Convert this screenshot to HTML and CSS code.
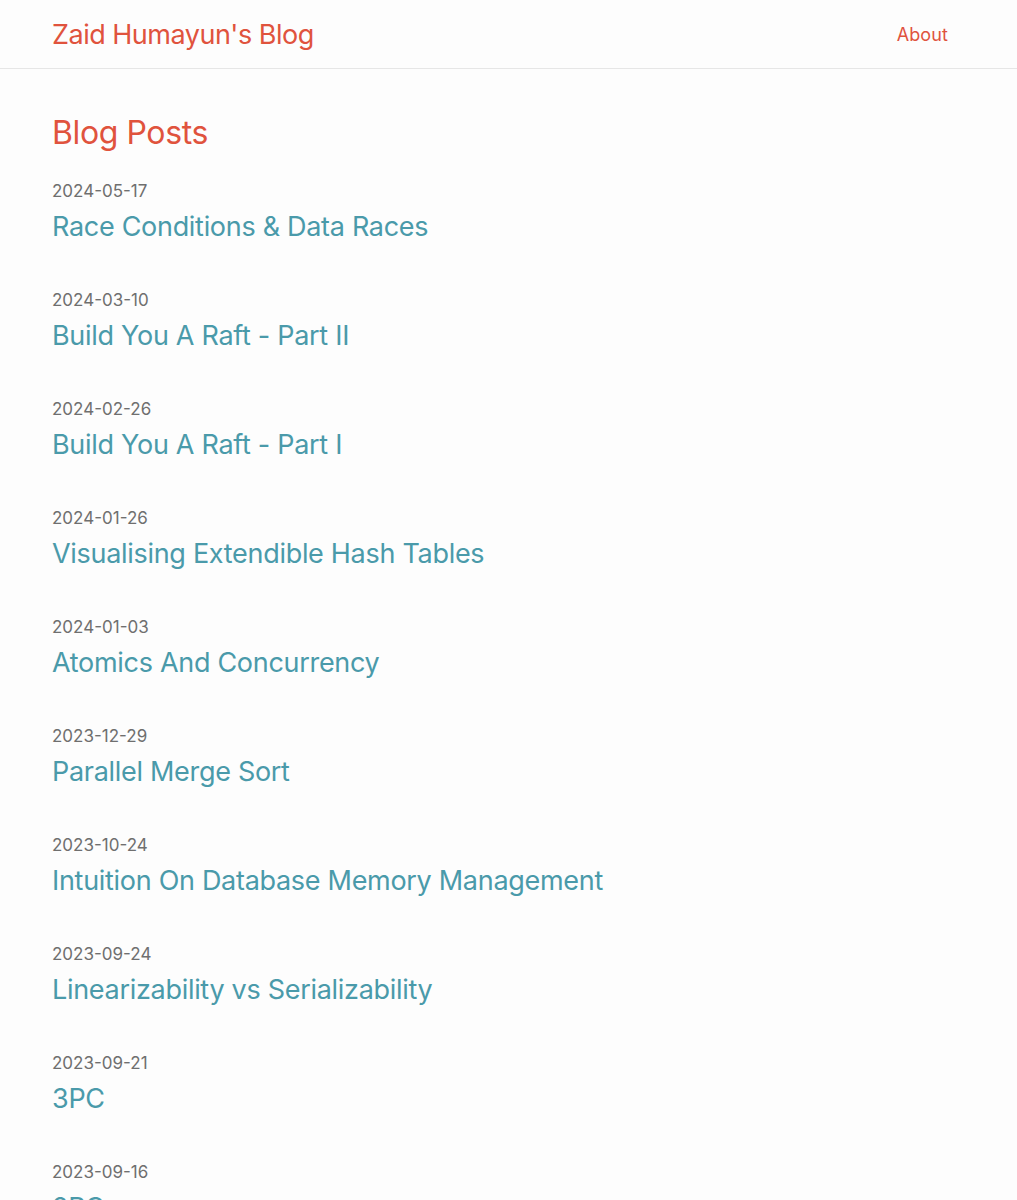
FILE: index.html
```html
<!DOCTYPE html>
<html lang="en">
<head>
<meta charset="utf-8">
<title>Zaid Humayun's Blog</title>
<link rel="stylesheet" href="styles.css">
</head>
<body>
<header class="site-header">
  <div class="wrap header-inner">
    <a class="site-title" href="#">Zaid Humayun's Blog</a>
    <nav class="site-nav"><a href="#">About</a></nav>
  </div>
</header>
<main class="wrap content">
  <h1 class="page-heading">Blog Posts</h1>
  <ul class="post-list">
    <li class="post"><span class="post-date">2024-05-17</span><a class="post-link" href="#">Race Conditions &amp; Data Races</a></li>
    <li class="post"><span class="post-date">2024-03-10</span><a class="post-link" href="#">Build You A Raft - Part II</a></li>
    <li class="post"><span class="post-date">2024-02-26</span><a class="post-link" href="#">Build You A Raft - Part I</a></li>
    <li class="post"><span class="post-date">2024-01-26</span><a class="post-link" href="#">Visualising Extendible Hash Tables</a></li>
    <li class="post"><span class="post-date">2024-01-03</span><a class="post-link" href="#">Atomics And Concurrency</a></li>
    <li class="post"><span class="post-date">2023-12-29</span><a class="post-link" href="#">Parallel Merge Sort</a></li>
    <li class="post"><span class="post-date">2023-10-24</span><a class="post-link" href="#">Intuition On Database Memory Management</a></li>
    <li class="post"><span class="post-date">2023-09-24</span><a class="post-link" href="#">Linearizability vs Serializability</a></li>
    <li class="post"><span class="post-date">2023-09-21</span><a class="post-link" href="#">3PC</a></li>
    <li class="post"><span class="post-date">2023-09-16</span><a class="post-link" href="#">2PC</a></li>
  </ul>
</main>
</body>
</html>
```
FILE: styles.css
```css
* { box-sizing: border-box; }
html, body { margin: 0; padding: 0; }
body {
  background: #fdfdfd;
  font-family: Inter, "Noto Sans", sans-serif;
  color: #333;
}
a { text-decoration: none; }
.wrap {
  padding: 0 69px 0 52px;
}
.site-header {
  border-bottom: 1px solid #e6e6e6;
  height: 69px;
}
.header-inner {
  height: 68px;
  display: flex;
  align-items: center;
  justify-content: space-between;
}
.site-title {
  color: #e0533d;
  font-size: 27px;
  letter-spacing: -0.5px;
  font-weight: 400;
}
.site-nav a {
  color: #e0533d;
  font-size: 18px;
  letter-spacing: 0.1px;
}
.content { padding-top: 41px; }
.page-heading {
  margin: 0 0 23px;
  color: #e0533d;
  font-size: 32px;
  font-weight: 400;
  line-height: 46px;
  letter-spacing: -0.4px;
}
.post-list {
  list-style: none;
  margin: 0;
  padding: 0;
  display: flex;
  flex-direction: column;
  gap: 37px;
}
.post { display: flex; flex-direction: column; }
.post-date {
  color: #6f6f6f;
  font-size: 17px;
  line-height: 24px;
}
.post-link {
  color: #4a9aaa;
  font-size: 27px;
  line-height: 48px;
  letter-spacing: -0.3px;
}
```
